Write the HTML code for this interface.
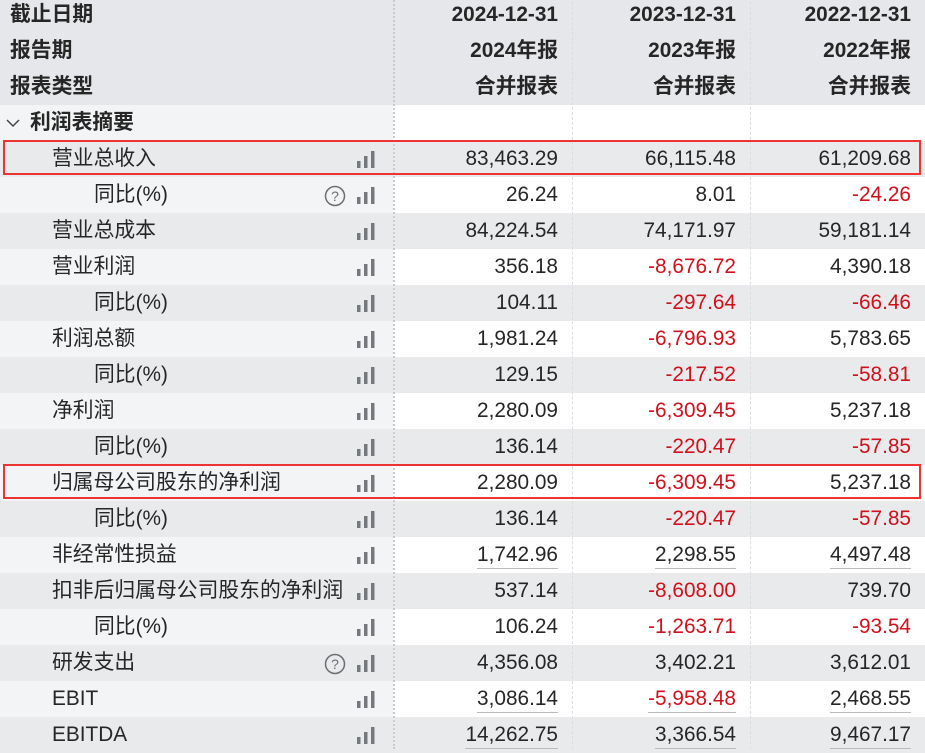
<!DOCTYPE html>
<html><head><meta charset="utf-8"><style>
*{margin:0;padding:0;box-sizing:border-box}
body{width:925px;height:752px;overflow:hidden;background:#fff;font-family:"Liberation Sans","Noto Sans CJK SC",sans-serif;color:#262626;font-size:20.8px;position:relative}
.r{position:absolute;left:0;width:925px;height:36px}
.c{position:absolute;top:0;height:36px;line-height:36px;white-space:nowrap}
.l{left:0;width:393px}
.v{text-align:right}
.v1{left:393px;width:179px;padding-right:14px}
.v2{left:572px;width:178px;padding-right:14px}
.v3{left:750px;width:175px;padding-right:14px}
.g .c{background:#e9eaec}
.w .l{background:#f3f4f5}
.w .v{background:#fff}
.h .c{background:#e6e7ea;font-weight:bold}
.red{color:#d0101b}
.u span{border-bottom:1.5px solid #bbb;padding-bottom:2px}
.vl{position:absolute;top:0;height:752px;width:0}
.bar{position:absolute;top:10px;left:356px}
.q{position:absolute;top:8px;left:324px}
.box{position:absolute;border:2px solid #ee3333;left:3px;width:918px;height:35px}
</style></head><body>
<div id="t" style="position:absolute;top:-3px;left:0;width:925px">
</div>
<script>
const rows=[
['h','截止日期',0,'2024-12-31','2023-12-31','2022-12-31'],
['h','报告期',0,'2024年报','2023年报','2022年报'],
['h','报表类型',0,'合并报表','合并报表','合并报表'],
['s','利润表摘要',0,'','',''],
['g','营业总收入',1,'83,463.29','66,115.48','61,209.68'],
['w','同比(%)',2,'26.24','8.01','-24.26',1],
['g','营业总成本',1,'84,224.54','74,171.97','59,181.14'],
['w','营业利润',1,'356.18','-8,676.72','4,390.18'],
['g','同比(%)',2,'104.11','-297.64','-66.46'],
['w','利润总额',1,'1,981.24','-6,796.93','5,783.65'],
['g','同比(%)',2,'129.15','-217.52','-58.81'],
['w','净利润',1,'2,280.09','-6,309.45','5,237.18'],
['g','同比(%)',2,'136.14','-220.47','-57.85'],
['w','归属母公司股东的净利润',1,'2,280.09','-6,309.45','5,237.18'],
['g','同比(%)',2,'136.14','-220.47','-57.85'],
['w','非经常性损益',1,'1,742.96','2,298.55','4,497.48',0,1],
['g','扣非后归属母公司股东的净利润',1,'537.14','-8,608.00','739.70'],
['w','同比(%)',2,'106.24','-1,263.71','-93.54'],
['g','研发支出',1,'4,356.08','3,402.21','3,612.01',1],
['w','EBIT',1,'3,086.14','-5,958.48','2,468.55',0,1],
['g','EBITDA',1,'14,262.75','3,366.54','9,467.17',0,1]];
const bar='<svg class="bar" width="22" height="18"><rect x="1" y="10" width="3.5" height="7" fill="#75787d"/><rect x="8" y="5" width="3.5" height="12" fill="#75787d"/><rect x="15" y="0" width="3.5" height="17" fill="#75787d"/></svg>';
const q='<svg class="q" width="22" height="22"><circle cx="11" cy="11" r="9.5" fill="none" stroke="#6b6e73" stroke-width="1.5"/><text x="11" y="16" text-anchor="middle" font-size="14" fill="#6b6e73" font-family="Liberation Sans">?</text></svg>';
let h='';
rows.forEach((r,i)=>{
 let cls=r[0]=='s'?'w':r[0];
 let lab;
 if(r[0]=='h') lab=`<div class="c l" style="padding-left:10px">${r[1]}</div>`;
 else if(r[0]=='s') lab=`<div class="c l" style="padding-left:30px;font-weight:bold"><svg style="position:absolute;left:6px;top:14px" width="14" height="9"><path d="M1 1 L7 7 L13 1" fill="none" stroke="#444" stroke-width="1.5"/></svg>${r[1]}</div>`;
 else lab=`<div class="c l" style="padding-left:${r[2]==1?52:94}px">${r[1]}${r[6]?q:''}${bar}</div>`;
 let vs=[3,4,5].map((k,j)=>{let t=r[k];let red=t.startsWith('-')?' red':'';return `<div class="c v v${j+1}${red}${r[7]?' u':''}"><span>${t}</span></div>`}).join('');
 h+=`<div class="r ${cls}" style="top:${i*36}px">${lab}${vs}</div>`;
});
h+='<div class="vl" style="left:393px;border-left:2px dotted #c9cacd"></div><div class="vl" style="left:572px;border-left:1px dashed #dcdde0"></div><div class="vl" style="left:750px;border-left:1px dashed #dcdde0"></div>';
h+='<div class="box" style="top:143px"></div><div class="box" style="top:467px"></div>';
document.getElementById('t').innerHTML=h;
</script>
</body></html>
